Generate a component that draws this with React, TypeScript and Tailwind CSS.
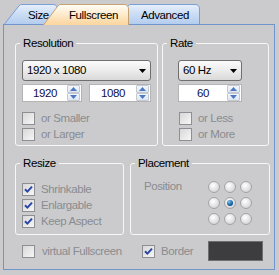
import type { ReactNode } from 'react'

const BG = 'bg-[#cbcbce]'

function Tab({
  label,
  width,
  textLeft,
  active,
  className,
}: {
  label: string
  width: number
  textLeft: number
  active?: boolean
  className?: string
}) {
  const h = active ? 21 : 20
  const w = width
  const d = `M0.5,${h} L15,1.8 Q16,0.5 18,0.5 L${w - 5},0.5 Q${w - 0.5},0.5 ${w - 0.5},5 L${w - 0.5},${h}`
  return (
    <div
      className={`relative shrink-0 ${active ? 'z-[2] h-[21px]' : 'z-[1] h-[20px]'} ${className ?? ''}`}
      style={{ width }}
    >
      <svg className="absolute inset-0" width={w} height={h} viewBox={`0 0 ${w} ${h}`}>
        <defs>
          <linearGradient id={`tab-${label}`} x1="0" y1="0" x2="0" y2="1">
            {active ? (
              <>
                <stop offset="0" stopColor="#fffdf8" />
                <stop offset="0.45" stopColor="#fdeccf" />
                <stop offset="1" stopColor="#fbd59d" />
              </>
            ) : (
              <>
                <stop offset="0" stopColor="#e8f0fb" />
                <stop offset="0.4" stopColor="#cfe0f6" />
                <stop offset="1" stopColor="#b4cdee" />
              </>
            )}
          </linearGradient>
        </defs>
        <path
          d={d}
          fill={`url(#tab-${label})`}
          stroke={active ? '#c4a274' : '#7a9fd4'}
          strokeWidth="1"
        />
      </svg>
      <span className="absolute top-[5px] text-black" style={{ left: textLeft }}>
        {label}
      </span>
    </div>
  )
}

function Group({
  label,
  className,
  children,
}: {
  label: string
  className?: string
  children?: ReactNode
}) {
  return (
    <div className={`relative rounded-[3px] border border-[#f7f7f7] ${className ?? ''}`}>
      <span className={`absolute -top-[7px] left-[4px] ${BG} px-[3px] text-black`}>
        {label}
      </span>
      {children}
    </div>
  )
}

function Arrow() {
  return (
    <svg width="7" height="4" viewBox="0 0 7 4">
      <path d="M0,0 L7,0 L3.5,4 Z" fill="#000" />
    </svg>
  )
}

function Select({ value, width }: { value: string; width: number }) {
  return (
    <div
      className="flex h-[21px] items-center justify-between rounded-[3px] border border-[#6f6f6f] bg-gradient-to-b from-[#fbfbfb] via-[#ececec] to-[#d9d9d9] pl-[4px] pr-[4px] text-black"
      style={{ width }}
    >
      <span>{value}</span>
      <Arrow />
    </div>
  )
}

function SpinButton({ up }: { up?: boolean }) {
  return (
    <div className="flex h-[8px] w-[13px] items-center justify-center rounded-[1px] border border-[#c3c9d3] bg-gradient-to-b from-[#f4f7fb] to-[#dfe6f0]">
      <svg width="7" height="4" viewBox="0 0 7 4">
        <path d={up ? 'M0,4 L7,4 L3.5,0 Z' : 'M0,0 L7,0 L3.5,4 Z'} fill="#4d79c2" />
      </svg>
    </div>
  )
}

function Spin({ value, width }: { value: string; width: number }) {
  return (
    <div
      className="flex h-[18px] items-center border border-[#b4b4b4] bg-white pr-[1px]"
      style={{ width }}
    >
      <span className="flex-1 text-center text-[#10104a]">{value}</span>
      <div className="flex flex-col">
        <SpinButton up />
        <SpinButton />
      </div>
    </div>
  )
}

function Check({ checked }: { checked?: boolean }) {
  return (
    <div className="flex h-[13px] w-[13px] shrink-0 items-center justify-center border border-[#8e8f92] bg-gradient-to-br from-[#d8d8da] to-[#f6f6f6]">
      {checked && (
        <svg width="9" height="9" viewBox="0 0 9 9">
          <path d="M1,4.2 L3.4,6.6 L8,1.6" fill="none" stroke="#2a47a6" strokeWidth="2" />
        </svg>
      )}
    </div>
  )
}

function CheckRow({ label, checked }: { label: string; checked?: boolean }) {
  return (
    <div className="flex h-[16px] items-center">
      <Check checked={checked} />
      <span className="ml-[6px] text-[#898b8f]">{label}</span>
    </div>
  )
}

function Radio({ selected }: { selected?: boolean }) {
  return (
    <div className="flex h-[12px] w-[12px] items-center justify-center rounded-full border border-[#a4a4a6] bg-[radial-gradient(circle_at_40%_35%,#ffffff,#d9d9db_70%,#c4c4c6)]">
      {selected && (
        <div className="h-[6px] w-[6px] rounded-full bg-[radial-gradient(circle_at_35%_30%,#7ec3f0,#0e5f9f_60%,#083f72)]" />
      )}
    </div>
  )
}

export default function App() {
  return (
    <div
      className={`h-[275px] w-[279px] overflow-hidden ${BG} pt-[4px] font-['Liberation_Sans',Arial,sans-serif] text-[11.5px] leading-[13px] tracking-[-0.4px]`}
    >
      <div className="relative z-10 flex h-[20px] pl-[4px]">
        <Tab label="Size" width={54} textLeft={24} />
        <Tab label="Fullscreen" width={86} textLeft={26} active className="-ml-[15px]" />
        <Tab label="Advanced" width={87} textLeft={28} className="-ml-[16px]" />
      </div>

      <div className="ml-[3px] h-[246px] w-[272px] border border-[#7095cc] pl-[11px] pt-[18px]">
        <div className="flex gap-[4px]">
          <Group label="Resolution" className="h-[103px] w-[143px] pl-[6px] pt-[16px]">
            <Select value="1920 x 1080" width={129} />
            <div className="mt-[3px] flex gap-[7px]">
              <Spin value="1920" width={60} />
              <Spin value="1080" width={62} />
            </div>
            <div className="mt-[8px]">
              <CheckRow label="or Smaller" />
              <CheckRow label="or Larger" />
            </div>
          </Group>
          <Group label="Rate" className="h-[103px] w-[107px] pl-[15px] pt-[16px]">
            <Select value="60 Hz" width={64} />
            <div className="mt-[3px]">
              <Spin value="60" width={64} />
            </div>
            <div className="ml-[1px] mt-[8px]">
              <CheckRow label="or Less" />
              <CheckRow label="or More" />
            </div>
          </Group>
        </div>

        <div className="mt-[17px] flex gap-[6px]">
          <Group label="Resize" className="h-[72px] w-[109px] pl-[6px] pt-[17px]">
            <CheckRow label="Shrinkable" checked />
            <CheckRow label="Enlargable" checked />
            <CheckRow label="Keep Aspect" checked />
          </Group>
          <Group label="Placement" className="h-[72px] w-[140px] pl-[13px] pt-[16px]">
            <div className="flex">
              <span className="w-[64px] text-[#898b8f]">Position</span>
              <div className="mt-[1px] grid grid-cols-3 gap-[4px]">
                <Radio />
                <Radio />
                <Radio />
                <Radio />
                <Radio selected />
                <Radio />
                <Radio />
                <Radio />
                <Radio />
              </div>
            </div>
          </Group>
        </div>

        <div className="mt-[6px] flex h-[20px] items-center pl-[7px]">
          <div className="flex w-[120px] items-center">
            <Check />
            <span className="ml-[7px] text-[#898b8f]">virtual Fullscreen</span>
          </div>
          <div className="flex w-[66px] items-center">
            <Check checked />
            <span className="ml-[6px] text-[#898b8f]">Border</span>
          </div>
          <div className="h-[20px] w-[55px] border border-[#6e6e70] bg-[#3d3d3f]" />
        </div>
      </div>
    </div>
  )
}
